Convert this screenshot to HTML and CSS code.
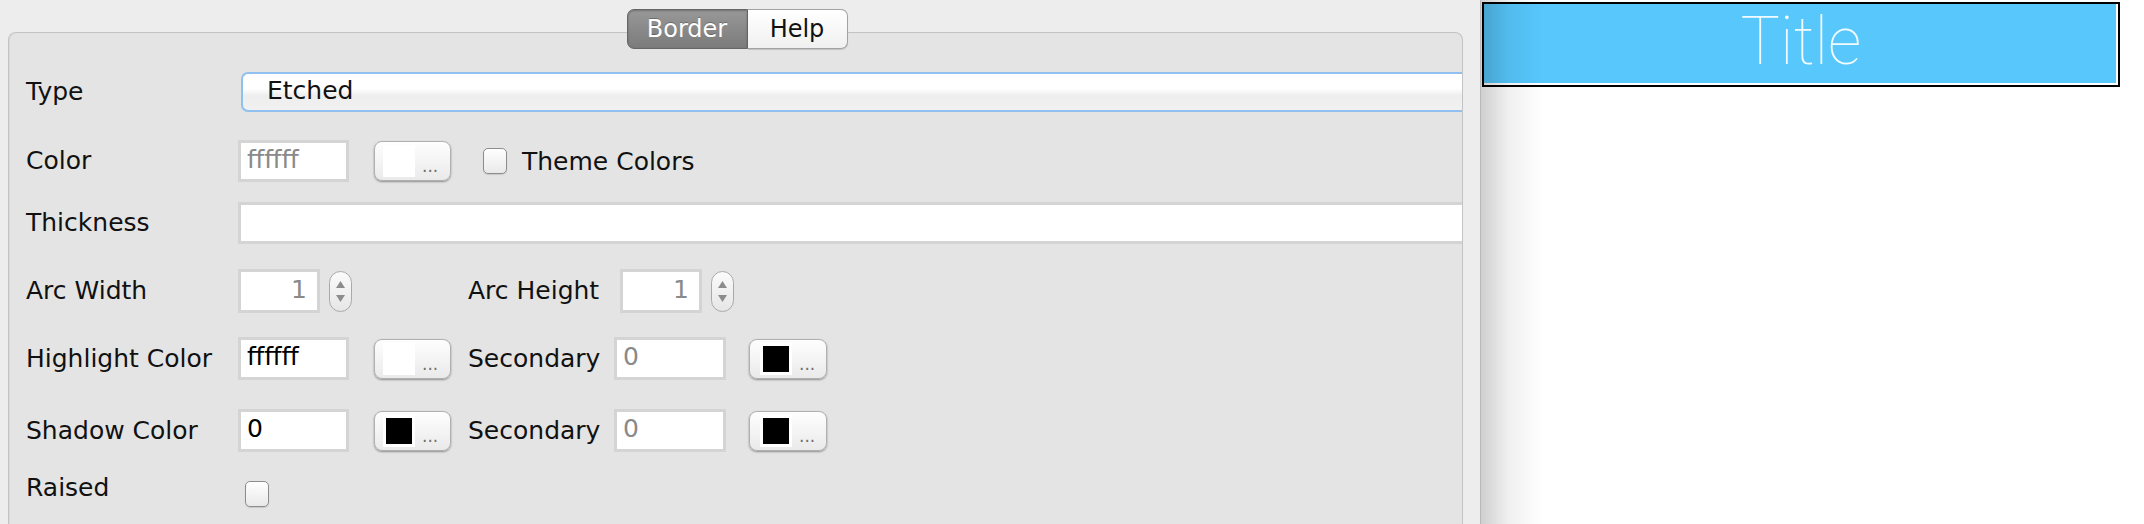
FILE: index.html
```html
<!DOCTYPE html>
<html>
<head>
<meta charset="utf-8">
<link rel="stylesheet" href="styles.css">
</head>
<body>
<div class="left-pane">
  <div class="tabs">
    <div class="tab tab-active">Border</div>
    <div class="tab tab-help">Help</div>
  </div>
  <div class="panel">
    <div class="form">
      <div class="row row-type">
        <div class="label">Type</div>
        <div class="combo">Etched</div>
      </div>
      <div class="row row-color">
        <div class="label">Color</div>
        <div class="field field-color disabled">ffffff</div>
        <div class="cbtn"><span class="swatch swatch-white"></span><span class="dots">...</span></div>
        <div class="check check-theme"></div>
        <div class="check-label">Theme Colors</div>
      </div>
      <div class="row row-thick">
        <div class="label">Thickness</div>
        <div class="field field-wide"></div>
      </div>
      <div class="row row-arc">
        <div class="label">Arc Width</div>
        <div class="field field-num disabled">1</div>
        <svg class="spinner" width="23" height="41" viewBox="0 0 23 41">
          <defs><linearGradient id="sg" x1="0" y1="0" x2="0" y2="1"><stop offset="0" stop-color="#fbfbfb"/><stop offset="1" stop-color="#e6e6e6"/></linearGradient></defs>
          <rect x="0.5" y="0.5" width="22" height="40" rx="11" fill="url(#sg)" stroke="#a9a9a9"/>
          <polygon points="11.5,10 16,17 7,17" fill="#8c8c8c"/>
          <polygon points="7,24 16,24 11.5,31" fill="#8c8c8c"/>
        </svg>
        <div class="label label-mid label-arch">Arc Height</div>
        <div class="field field-num disabled">1</div>
        <svg class="spinner" width="23" height="41" viewBox="0 0 23 41">
          <rect x="0.5" y="0.5" width="22" height="40" rx="11" fill="url(#sg)" stroke="#a9a9a9"/>
          <polygon points="11.5,10 16,17 7,17" fill="#8c8c8c"/>
          <polygon points="7,24 16,24 11.5,31" fill="#8c8c8c"/>
        </svg>
      </div>
      <div class="row row-pair row-hl">
        <div class="label">Highlight Color</div>
        <div class="field field-color">ffffff</div>
        <div class="cbtn"><span class="swatch swatch-white"></span><span class="dots">...</span></div>
        <div class="label label-mid">Secondary</div>
        <div class="field field-sec disabled">0</div>
        <div class="cbtn cbtn-sec"><span class="swatch swatch-black"></span><span class="dots">...</span></div>
      </div>
      <div class="row row-pair row-sh">
        <div class="label">Shadow Color</div>
        <div class="field field-color">0</div>
        <div class="cbtn"><span class="swatch swatch-black"></span><span class="dots">...</span></div>
        <div class="label label-mid">Secondary</div>
        <div class="field field-sec disabled">0</div>
        <div class="cbtn cbtn-sec"><span class="swatch swatch-black"></span><span class="dots">...</span></div>
      </div>
      <div class="row row-raised">
        <div class="label label-raised">Raised</div>
        <div class="check check-raised"></div>
      </div>
    </div>
  </div>
</div>
<div class="right-pane">
  <div class="title-box">Title</div>
</div>
</body>
</html>
```

FILE: styles.css
```css
html, body {
  margin: 0;
  padding: 0;
}
body {
  width: 2144px;
  height: 524px;
  overflow: hidden;
  background: #ededed;
  display: flex;
  font-family: "DejaVu Sans", "Liberation Sans", sans-serif;
  color: #111;
}
.left-pane {
  width: 1472px;
  padding: 9px 0 0 8px;
  display: flex;
  flex-direction: column;
  border-right: 1px solid #b9b9b9;
  box-sizing: content-box;
}
.tabs {
  display: flex;
  justify-content: center;
  width: 1455px;
  padding-left: 3px;
  box-sizing: border-box;
  position: relative;
  z-index: 1;
}
.tab {
  height: 40px;
  box-sizing: border-box;
  font-size: 24px;
  line-height: 38px;
  text-align: center;
}
.tab-active {
  width: 121px;
  background: linear-gradient(#989898, #7b7b7b);
  border: 1px solid #666;
  border-radius: 7px 0 0 7px;
  color: #fff;
  text-shadow: 0 -1px 0 rgba(0,0,0,0.25);
  box-shadow: inset 0 1px 2px rgba(0,0,0,0.25);
}
.tab-help {
  width: 100px;
  background: linear-gradient(#ffffff, #f0f0f0);
  border: 1px solid #a2a2a2;
  border-left: none;
  border-radius: 0 7px 7px 0;
  color: #111;
  box-shadow: 0 1px 1px rgba(0,0,0,0.15);
}
.panel {
  width: 1455px;
  box-sizing: border-box;
  flex: 1;
  margin-top: -17px;
  background: #e4e4e4;
  border: 1px solid #c3c3c3;
  border-bottom: none;
  border-radius: 8px 8px 0 0;
  box-shadow: inset 1px 0 1px rgba(0,0,0,0.04);
  overflow: hidden;
}
.form {
  padding: 39px 0 0 17px;
  display: flex;
  flex-direction: column;
}
.row {
  display: flex;
  align-items: center;
}
.row-color { margin-top: 28px; }
.row-thick { margin-top: 20px; }
.row-arc { margin-top: 25px; }
.row-hl { margin-top: 24px; }
.row-sh { margin-top: 29px; }
.label {
  width: 212px;
  flex: none;
  font-size: 25px;
  line-height: 30px;
  white-space: nowrap;
}
.label-mid {
  width: 146px;
  margin-left: 17px;
}
.label-arch {
  width: 152px;
  margin-left: 116px;
}
.combo {
  flex: 1;
  height: 40px;
  box-sizing: border-box;
  margin-left: 3px;
  border: 2px solid #8fc0ef;
  border-right: none;
  border-radius: 7px 0 0 7px;
  background: linear-gradient(#ffffff 0%, #ffffff 40%, #eeeeee 60%, #f1f1f1 100%);
  font-size: 25px;
  line-height: 34px;
  padding-left: 24px;
}
.field {
  height: 42px;
  box-sizing: border-box;
  border: 3px solid #d4d4d4;
  background: #fff;
  font-size: 25px;
  line-height: 34px;
  padding-left: 6px;
  color: #000;
  flex: none;
}
.field.disabled {
  color: #8a8a8a;
}
.field-color {
  width: 111px;
  height: 43px;
}
.row-color .field-color {
  height: 42px;
}
.field-wide {
  flex: 1;
  border-right: none;
}
.field-num {
  width: 82px;
  height: 44px;
  text-align: right;
  padding: 0 10px 0 0;
  line-height: 36px;
}
.field-sec {
  width: 112px;
  height: 43px;
}
.spinner {
  flex: none;
  margin-left: 9px;
}
.cbtn {
  flex: none;
  width: 77px;
  height: 40px;
  box-sizing: border-box;
  margin-left: 25px;
  border: 1px solid #b0b0b0;
  border-radius: 8px;
  background: linear-gradient(#fefefe, #eaeaea);
  box-shadow: 0 1px 2px rgba(0,0,0,0.38);
  display: flex;
  align-items: center;
  padding-left: 8px;
}
.cbtn-sec {
  width: 78px;
  margin-left: 23px;
  padding-left: 10px;
}
.swatch {
  width: 32px;
  height: 32px;
  box-sizing: border-box;
  border: 3px solid #fff;
  flex: none;
}
.swatch-white { background: #fff; }
.swatch-black { background: #000; }
.dots {
  font-size: 17px;
  color: #6f6f6f;
  margin-left: 7px;
  margin-top: 10px;
}
.check {
  flex: none;
  width: 24px;
  height: 26px;
  box-sizing: border-box;
  border: 1px solid #8d8d8d;
  border-radius: 5px;
  background: linear-gradient(#ffffff, #e9e9e9);
  box-shadow: 0 1px 1px rgba(0,0,0,0.12);
}
.check-theme {
  margin-left: 32px;
}
.check-label {
  font-size: 25px;
  margin-left: 15px;
  white-space: nowrap;
}
.row-raised {
  align-items: flex-start;
  margin-top: 29px;
}
.label-raised {
  line-height: 20px;
  margin-top: -3px;
}
.check-raised {
  margin-left: 7px;
}
.right-pane {
  flex: 1;
  position: relative;
  background: #fff;
}
.right-pane::before {
  content: "";
  position: absolute;
  left: 0;
  top: 0;
  bottom: 0;
  width: 62px;
  background: linear-gradient(to right, rgba(0,0,0,0.19), rgba(0,0,0,0.06) 45%, rgba(0,0,0,0));
  pointer-events: none;
  z-index: 2;
}
.title-box {
  margin: 2px 0 0 1px;
  width: 638px;
  height: 85px;
  box-sizing: border-box;
  border: 2px solid #000;
  background: #57c7fc;
  box-shadow: inset -2px -2px 0 #fff;
  font-family: "Roboto", "Lato", sans-serif;
  font-weight: 100;
  font-size: 66px;
  line-height: 66px;
  padding-top: 5px;
  text-align: center;
  color: rgba(255,255,255,0.92);
}
```
